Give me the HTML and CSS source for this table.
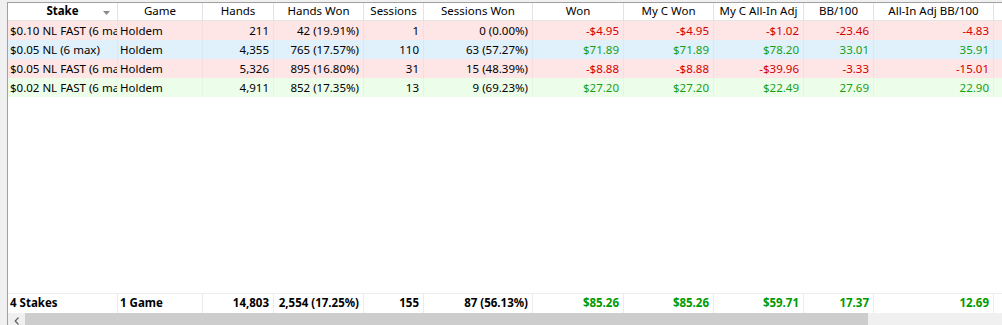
FILE: index.html
```html
<!DOCTYPE html>
<html>
<head>
<meta charset="utf-8">
<link rel="stylesheet" href="styles.css">
</head>
<body>
<div class="frame">
  <div class="grid">
    <div class="row head">
      <div class="c stake-h">Stake<svg class="sort" width="7" height="4" viewBox="0 0 7 4"><path d="M0 0H7L3.5 4Z" fill="#8a8a8a"/></svg></div>
      <div class="c">Game</div>
      <div class="c">Hands</div>
      <div class="c">Hands Won</div>
      <div class="c">Sessions</div>
      <div class="c">Sessions Won</div>
      <div class="c">Won</div>
      <div class="c">My C Won</div>
      <div class="c">My C All-In Adj</div>
      <div class="c">BB/100</div>
      <div class="c">All-In Adj BB/100</div>
      <div class="c last"></div>
    </div>
    <div class="row pink">
      <div class="c l">$0.10 NL FAST (6 max)</div>
      <div class="c l">Holdem</div>
      <div class="c r">211</div>
      <div class="c r">42 (19.91%)</div>
      <div class="c r">1</div>
      <div class="c r">0 (0.00%)</div>
      <div class="c r neg">-$4.95</div>
      <div class="c r neg">-$4.95</div>
      <div class="c r neg">-$1.02</div>
      <div class="c r neg">-23.46</div>
      <div class="c r neg">-4.83</div>
      <div class="c last"></div>
    </div>
    <div class="row blue">
      <div class="c l">$0.05 NL (6 max)</div>
      <div class="c l">Holdem</div>
      <div class="c r">4,355</div>
      <div class="c r">765 (17.57%)</div>
      <div class="c r">110</div>
      <div class="c r">63 (57.27%)</div>
      <div class="c r pos">$71.89</div>
      <div class="c r pos">$71.89</div>
      <div class="c r pos">$78.20</div>
      <div class="c r pos">33.01</div>
      <div class="c r pos">35.91</div>
      <div class="c last"></div>
    </div>
    <div class="row pink">
      <div class="c l">$0.05 NL FAST (6 max)</div>
      <div class="c l">Holdem</div>
      <div class="c r">5,326</div>
      <div class="c r">895 (16.80%)</div>
      <div class="c r">31</div>
      <div class="c r">15 (48.39%)</div>
      <div class="c r neg">-$8.88</div>
      <div class="c r neg">-$8.88</div>
      <div class="c r neg">-$39.96</div>
      <div class="c r neg">-3.33</div>
      <div class="c r neg">-15.01</div>
      <div class="c last"></div>
    </div>
    <div class="row green">
      <div class="c l">$0.02 NL FAST (6 max)</div>
      <div class="c l">Holdem</div>
      <div class="c r">4,911</div>
      <div class="c r">852 (17.35%)</div>
      <div class="c r">13</div>
      <div class="c r">9 (69.23%)</div>
      <div class="c r pos">$27.20</div>
      <div class="c r pos">$27.20</div>
      <div class="c r pos">$22.49</div>
      <div class="c r pos">27.69</div>
      <div class="c r pos">22.90</div>
      <div class="c last"></div>
    </div>
    <div class="spacer"></div>
    <div class="row foot">
      <div class="c l">4 Stakes</div>
      <div class="c l">1 Game</div>
      <div class="c r">14,803</div>
      <div class="c r">2,554 (17.25%)</div>
      <div class="c r">155</div>
      <div class="c r">87 (56.13%)</div>
      <div class="c r fpos">$85.26</div>
      <div class="c r fpos">$85.26</div>
      <div class="c r fpos">$59.71</div>
      <div class="c r fpos">17.37</div>
      <div class="c r fpos">12.69</div>
      <div class="c last"></div>
    </div>
  </div>
  <div class="hscroll">
    <div class="arrow"><svg width="6" height="8" viewBox="0 0 6 8"><path d="M4.5 0.5L1.2 4L4.5 7.5" fill="none" stroke="#606060" stroke-width="1.2"/></svg></div>
    <div class="thumb"></div>
    <div class="track"></div>
  </div>
</div>
</body>
</html>
```
FILE: styles.css
```css
html, body {
  margin: 0;
  padding: 0;
  width: 1002px;
  height: 325px;
  overflow: hidden;
  background: #f0f0f0;
}
.frame {
  margin: 2px 0 0 7px;
  border-left: 1px solid #a0a0a0;
  border-top: 1px solid #a0a0a0;
  background: #ffffff;
  font-family: "Noto Sans", "Open Sans", sans-serif;
  font-size: 11.5px;
  color: #000;
}
.grid {
  display: flex;
  flex-direction: column;
}
.row {
  display: grid;
  grid-template-columns: 110px 85px 71px 90px 60px 109px 91px 90px 90px 70px 120px 1fr;
  height: 19px;
}
.c {
  box-sizing: border-box;
  border-right: 1px solid #f0f0f0;
  white-space: nowrap;
  overflow: hidden;
  line-height: 19px;
  padding: 0 2px;
}
.c.last { border-right: none; }
.c.l { text-align: left; }
.c.r { text-align: right; padding-right: 4px; }

.head {
  height: 18px;
  border-bottom: 1px solid #e5e5e5;
  box-sizing: border-box;
}
.head .c {
  text-align: center;
  line-height: 16px;
  border-right: 1px solid #e3e3e3;
  background: #fff;
}
.head .c.last { border-right: none; }
.stake-h {
  position: relative;
  font-weight: bold;
}
.sort {
  position: absolute;
  right: 7px;
  top: 8px;
}

.pink { background: #ffe6e6; }
.blue { background: #e0f1fb; }
.green { background: #ecfeea; }
.pink .c, .blue .c, .green .c { border-right-color: rgba(0,0,0,0.03); }

.neg { color: #d00000; }
.pos { color: #16a016; }

.spacer { height: 196px; }

.foot {
  border-top: 1px solid #eeeeee;
  height: 20px;
  box-sizing: border-box;
  font-weight: bold;
}
.foot .c { line-height: 18px; border-right-color: #ececec; }
.foot .c.last { border-right: none; }
.fpos { color: #009a00; }

.hscroll {
  display: flex;
  height: 12px;
  background: #f0f0f0;
}
.arrow {
  width: 17px;
  display: flex;
  align-items: flex-start;
  justify-content: center;
  padding-top: 4px;
  box-sizing: border-box;
}
.thumb {
  width: 843px;
  background: #cdcdcd;
}
.track { flex: 1; }
```
